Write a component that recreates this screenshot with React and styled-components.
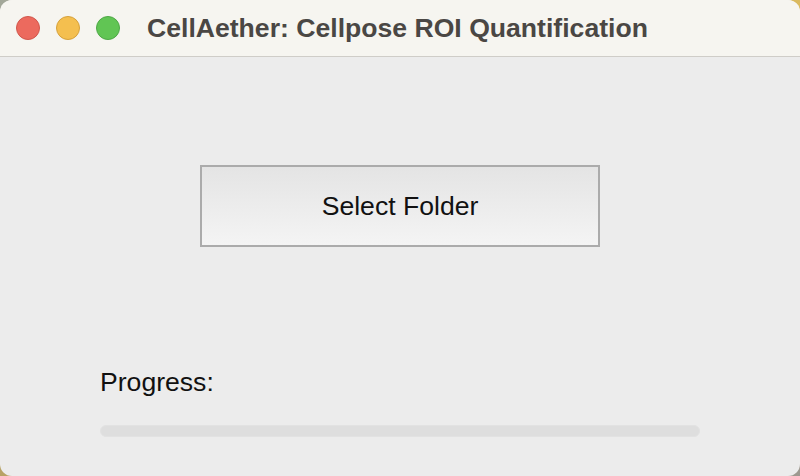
import React from 'react'
import styled, { createGlobalStyle } from 'styled-components'

const GlobalStyle = createGlobalStyle`
  html, body {
    margin: 0;
    padding: 0;
  }
  body {
    width: 800px;
    height: 476px;
    overflow: hidden;
    font-family: "Liberation Sans", Arial, sans-serif;
    background: linear-gradient(135deg, #a3a89a 0%, #b9a262 40%, #e5c25e 70%, #9c9890 100%);
  }
`

const Window = styled.div`
  width: 800px;
  height: 476px;
  border-radius: 12px;
  overflow: hidden;
  display: flex;
  flex-direction: column;
  background: #ececec;
`

const TitleBar = styled.div`
  height: 56px;
  flex: none;
  display: flex;
  align-items: center;
  padding-left: 16px;
  background: #f6f5f0;
  border-bottom: 1px solid #cfcdc8;
`

const Lights = styled.div`
  display: flex;
  gap: 16px;
  margin-right: 27px;
`

const Light = styled.span`
  width: 24px;
  height: 24px;
  border-radius: 50%;
  box-sizing: border-box;
  background: ${p => p.$color};
  border: 1px solid ${p => p.$edge};
`

const Title = styled.h1`
  margin: 0;
  font-size: 26.6px;
  font-weight: 700;
  color: #4a4744;
`

const Body = styled.div`
  flex: 1;
  display: flex;
  flex-direction: column;
  padding: 108px 100px 0;
`

const FolderButton = styled.button`
  align-self: center;
  width: 400px;
  height: 82px;
  box-sizing: border-box;
  border: 2px solid #ababab;
  background: linear-gradient(#e4e4e4, #f4f4f4);
  font-family: "Liberation Sans", Arial, sans-serif;
  font-size: 26.6px;
  color: #111;
  padding: 0;
`

const Label = styled.div`
  margin-top: 120px;
  font-size: 26.6px;
  color: #111;
  line-height: 30px;
`

const Track = styled.div`
  margin-top: 28px;
  height: 12px;
  border-radius: 6px;
  background: #dedede;
  border: 1px solid #e2e2e2;
  box-sizing: border-box;
`

export default function App() {
  return (
    <>
      <GlobalStyle />
      <Window>
        <TitleBar>
          <Lights>
            <Light $color="#ec6a5e" $edge="#d1574c" />
            <Light $color="#f4bf4f" $edge="#d6a13b" />
            <Light $color="#61c554" $edge="#4ea846" />
          </Lights>
          <Title>CellAether: Cellpose ROI Quantification</Title>
        </TitleBar>
        <Body>
          <FolderButton>Select Folder</FolderButton>
          <Label>Progress:</Label>
          <Track />
        </Body>
      </Window>
    </>
  )
}
